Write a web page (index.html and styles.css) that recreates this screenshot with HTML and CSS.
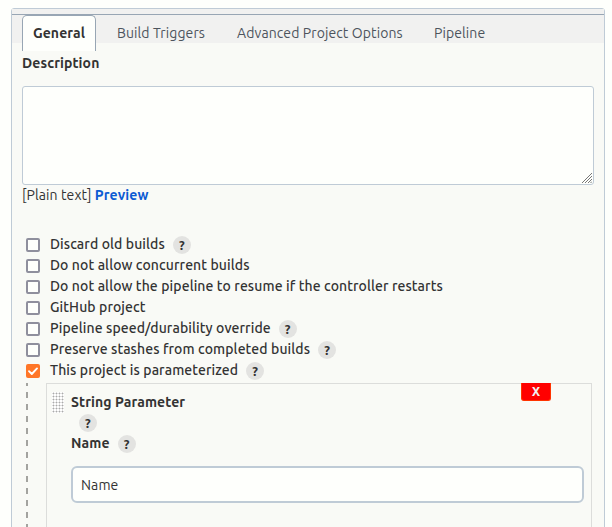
FILE: index.html
```html
<!DOCTYPE html>
<html lang="en">
<head>
<meta charset="utf-8">
<title>Project configuration</title>
<link rel="stylesheet" href="styles.css">
</head>
<body>
<main class="panel">
  <nav class="tabs">
    <a class="tab active">General</a>
    <a class="tab triggers">Build Triggers</a>
    <a class="tab advanced">Advanced Project Options</a>
    <a class="tab pipeline">Pipeline</a>
  </nav>
  <section class="content">
    <label class="heading description" for="description">Description</label>
    <div class="textarea-wrap">
      <textarea class="textarea" id="description"></textarea>
      <svg class="resizer" viewBox="0 0 10 10" width="10" height="10"><path d="M0 10 10 0M3 10 10 3M6 10l4-4M8.500 10 10 8.500" fill="none" stroke="#777" stroke-width="1"/></svg>
    </div>
    <div class="format">[Plain text] <a class="preview">Preview</a></div>
    <div class="options">
      <div class="option"><span class="check"></span><span class="label">Discard old builds</span><span class="help">?</span></div>
      <div class="option"><span class="check"></span><span class="label">Do not allow concurrent builds</span></div>
      <div class="option"><span class="check"></span><span class="label">Do not allow the pipeline to resume if the controller restarts</span></div>
      <div class="option"><span class="check"></span><span class="label">GitHub project</span></div>
      <div class="option"><span class="check"></span><span class="label">Pipeline speed/durability override</span><span class="help">?</span></div>
      <div class="option"><span class="check"></span><span class="label">Preserve stashes from completed builds</span><span class="help">?</span></div>
      <div class="option"><span class="check checked"><svg viewBox="0 0 14 14" width="14" height="14"><path d="M3 7.200 5.800 10 11 4.400" fill="none" stroke="#fff" stroke-width="1.900" stroke-linecap="round" stroke-linejoin="round"/></svg></span><span class="label">This project is parameterized</span><span class="help">?</span></div>
    </div>
    <div class="nested">
      <div class="parameter">
        <span class="grip"></span>
        <div class="fields">
          <div class="heading title">String Parameter</div>
          <div class="row"><span class="help">?</span></div>
          <div class="row"><span class="heading">Name</span><span class="help">?</span></div>
          <input class="input" value="Name">
        </div>
        <button class="remove">X</button>
      </div>
    </div>
  </section>
</main>
</body>
</html>
```
FILE: styles.css
```css
* { box-sizing: border-box; }
body {
  margin: 0;
  height: 527px;
  overflow: hidden;
  background: #fefffc;
  color: #333;
  font: 14px/21px "Ubuntu", "Noto Sans", sans-serif;
  letter-spacing: 0.1px;
}
.panel {
  width: 594px;
  height: 540px;
  margin: 8px 0 0 11px;
  border: 1px solid #bfcbd6;
  border-radius: 3px;
  background: #f9faf6;
}
.tabs {
  display: flex;
  height: 34px;
  padding: 5px 0 0 10px;
  background: linear-gradient(#98a6b4, #98a6b4) 0 5px / 100% 1px no-repeat #f1f1f0;
}
.tab {
  flex: none;
  height: 37px;
  padding-top: 10px;
  line-height: 18px;
  color: #4d545d;
  white-space: nowrap;
}
.active {
  width: 74px;
  height: 36px;
  margin-top: 1px;
  padding-top: 8px;
  text-align: center;
  border: 1px solid #98a6b4;
  border-width: 1px 1px 0;
  border-radius: 5px 5px 0 0;
  background: #fefffc;
  color: #333;
  font-weight: 700;
}
.triggers { margin-left: 21px; width: 120px; }
.advanced { width: 197px; }
.heading { font-weight: 700; }
.content { padding: 10px 10px 0; }
.description { display: block; height: 33px; line-height: 20px; }
.textarea-wrap { position: relative; width: 572px; height: 99px; }
.textarea {
  display: block;
  width: 100%;
  height: 100%;
  border: 1px solid #bfcbd6;
  border-radius: 3px;
  background: #fefffc;
  resize: none;
}
.resizer { position: absolute; right: 2px; bottom: 2px; }
.format { height: 22px; line-height: 20px; }
.preview { color: #0b5bd3; font-weight: 700; }
.options { margin-top: 27px; }
.option { display: flex; align-items: center; height: 21px; }
.check {
  flex: none;
  width: 14px;
  height: 14px;
  margin: 0 10px 0 4px;
  border: 2px solid #8f8f9d;
  border-radius: 2px;
  background: #fefffc;
}
.checked { border: 0; background: #ff7628; }
.check svg { display: block; }
.label { font-weight: 500; white-space: nowrap; }
.help {
  display: block;
  width: 18px;
  height: 18px;
  margin-left: 8px;
  border-radius: 50%;
  background: #e3e3e1;
  text-align: center;
  font-size: 13px;
  line-height: 18px;
  font-weight: 700;
}
.nested {
  height: 160px;
  margin: 2px 0 0 4px;
  padding-left: 20px;
  background: repeating-linear-gradient(#a3a39f 0 3px, transparent 3px 9px, #a3a39f 9px 12px) 0 0 / 2px 100% no-repeat;
}
.parameter {
  position: relative;
  display: flex;
  width: 546px;
  height: 170px;
  padding: 8px 0 0 5px;
  border: 1px solid #dcdddb;
}
.grip {
  width: 12px;
  height: 21px;
  background: radial-gradient(circle, #aaa 0.7px, #fff 1.2px) 0 0 / 3px 3px;
}
.fields { width: 513px; margin-left: 7px; }
.title { height: 20px; line-height: 20px; }
.row { display: flex; align-items: center; height: 21px; }
.input {
  display: block;
  width: 513px;
  height: 37px;
  margin-top: 12px;
  padding: 0 8px;
  border: 2px solid #bfcbd6;
  border-radius: 6px;
  background: #fefffc;
  color: #333;
  font: inherit;
  letter-spacing: inherit;
}
.remove {
  position: absolute;
  top: -1px;
  right: 40px;
  width: 30px;
  height: 18px;
  padding: 0;
  border: 1px solid #ff3300;
  border-top: 0;
  border-radius: 0 0 3px 3px;
  background: #f00;
  color: #f1f1f1;
  font: 700 12px/17px "Noto Sans", sans-serif;
}
```
